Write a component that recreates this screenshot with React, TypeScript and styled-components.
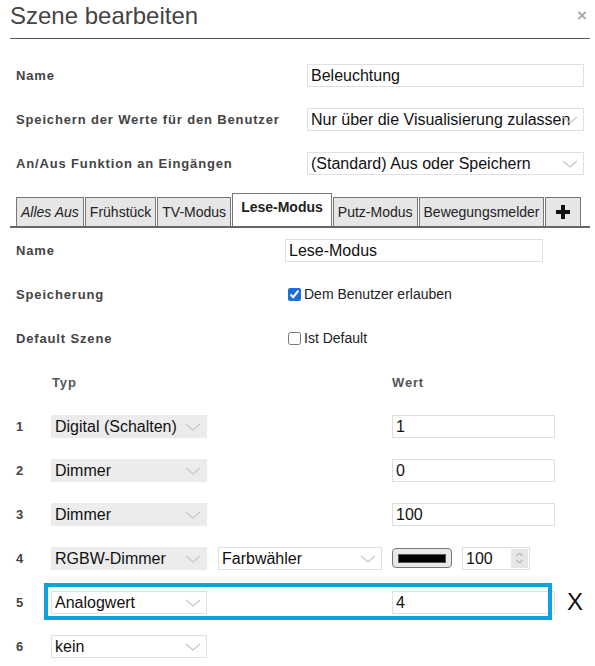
import React from 'react'
import styled, { createGlobalStyle } from 'styled-components'

const GlobalStyle = createGlobalStyle`
  body {
    margin: 0;
    background: #ffffff;
    font-family: 'Liberation Sans', Arial, sans-serif;
    color: #222;
  }
`

const Dialog = styled.div`
  width: 595px;
  box-sizing: border-box;
  padding: 0 5px 0 10px;
`

const Header = styled.div`
  display: flex;
  justify-content: space-between;
  align-items: flex-start;
  height: 38px;
  border-bottom: 1px solid #555;
`

const Title = styled.h1`
  margin: 0;
  font-size: 24px;
  line-height: 31px;
  font-weight: normal;
  color: #444;
`

const Close = styled.span`
  font-size: 17px;
  line-height: 32px;
  font-weight: bold;
  color: #aaa;
  margin-right: 3px;
`

const Section = styled.div<{ top?: number }>`
  padding-left: 6px;
  padding-top: ${(p) => p.top || 0}px;
`

const Row = styled.div`
  display: flex;
  align-items: center;
  height: 44px;
  position: relative;
`

const Label = styled.div<{ w: number }>`
  width: ${(p) => p.w}px;
  flex-shrink: 0;
  font-size: 13px;
  font-weight: bold;
  letter-spacing: 0.85px;
  color: #444;
`

const TextInput = styled.div<{ w: number }>`
  position: relative;
  width: ${(p) => p.w}px;
  height: 23px;
  box-sizing: border-box;
  border: 1px solid #e0e0e0;
  padding: 0 3px;
  font-size: 16px;
  line-height: 21px;
  color: #111;
  white-space: nowrap;
  overflow: hidden;
  flex-shrink: 0;
`

const Select = styled.div<{ w: number; filled?: boolean }>`
  position: relative;
  width: ${(p) => p.w}px;
  height: 23px;
  box-sizing: border-box;
  border: 1px solid ${(p) => (p.filled ? '#ececec' : '#e0e0e0')};
  background: ${(p) => (p.filled ? '#ececec' : '#ffffff')};
  padding: 0 3px;
  font-size: 16px;
  line-height: 21px;
  color: #111;
  white-space: nowrap;
  overflow: hidden;
  flex-shrink: 0;
`

const ChevronBox = styled.span`
  position: absolute;
  right: 5px;
  top: 7px;
  display: flex;
`

const Chevron = () => (
  <ChevronBox>
    <svg width="16" height="8" viewBox="0 0 16 8">
      <path d="M1 1 L8 7 L15 1" fill="none" stroke="#c6c6c6" strokeWidth="1.2" />
    </svg>
  </ChevronBox>
)

const TabBar = styled.div`
  display: flex;
  align-items: flex-end;
  gap: 1px;
  height: 41px;
  padding-left: 6px;
  border-bottom: 2px solid #666;
`

const Tab = styled.div<{ active?: boolean; italic?: boolean; wide?: boolean }>`
  height: ${(p) => (p.active ? 33 : 29)}px;
  box-sizing: border-box;
  flex-shrink: 0;
  white-space: nowrap;
  padding: ${(p) => (p.active ? '5px 8px 0' : p.wide ? '0 10px' : '0 4px')};
  display: flex;
  align-items: ${(p) => (p.active ? 'flex-start' : 'center')};
  border: 1px solid #777;
  border-bottom: none;
  background: ${(p) => (p.active ? '#ffffff' : '#e6e6e6')};
  font-size: 14px;
  font-weight: ${(p) => (p.active ? 'bold' : 'normal')};
  font-style: ${(p) => (p.italic ? 'italic' : 'normal')};
  color: #222;
`

const CheckLabel = styled.label`
  display: flex;
  align-items: center;
  gap: 3px;
  font-size: 14px;
  color: #222;
  margin-left: 3px;
`

const Check = styled.input`
  margin: 0;
  width: 13px;
  height: 13px;
  accent-color: #1b6fd6;
`

const HeadCell = styled.div<{ w: number }>`
  width: ${(p) => p.w}px;
  font-size: 13px;
  font-weight: bold;
  letter-spacing: 0.85px;
  color: #555;
`

const Num = styled.div`
  width: 35px;
  flex-shrink: 0;
  font-size: 13px;
  font-weight: bold;
  color: #444;
`

const Middle = styled.div`
  width: 185px;
  flex-shrink: 0;
  display: flex;
  padding-left: 11px;
  box-sizing: border-box;
`

const ColorButton = styled.div`
  width: 60px;
  height: 20px;
  box-sizing: border-box;
  border: 1px solid #777;
  border-radius: 4px;
  background: #e9e9e9;
  display: flex;
  align-items: center;
  justify-content: center;
  margin-right: 10px;
  flex-shrink: 0;
`

const Swatch = styled.div`
  width: 48px;
  height: 9px;
  background: #000;
  border: 1px solid #555;
  box-sizing: border-box;
`

const Spinner = styled.span`
  position: absolute;
  right: 1px;
  top: 1px;
  bottom: 1px;
  width: 17px;
  background: #e6e6e6;
  display: flex;
  align-items: center;
  justify-content: center;
`

const Highlight = styled.div`
  position: absolute;
  left: 28px;
  top: 3px;
  width: 508px;
  height: 37px;
  box-sizing: border-box;
  border: 4px solid #0ba2df;
  pointer-events: none;
`

const Remove = styled.span`
  margin-left: 12px;
  font-size: 24px;
  color: #111;
`

type TypeRow = { n: number; type: string; filled: boolean; value?: string }

const rows: TypeRow[] = [
  { n: 1, type: 'Digital (Schalten)', filled: true, value: '1' },
  { n: 2, type: 'Dimmer', filled: true, value: '0' },
  { n: 3, type: 'Dimmer', filled: true, value: '100' },
]

const tabs = ['Alles Aus', 'Frühstück', 'TV-Modus', 'Lese-Modus', 'Putz-Modus', 'Bewegungsmelder']

const App = () => {
  return (
    <Dialog>
      <GlobalStyle />
      <Header>
        <Title>Szene bearbeiten</Title>
        <Close>×</Close>
      </Header>

      <Section top={14}>
        <Row>
          <Label w={291}>Name</Label>
          <TextInput w={277}>Beleuchtung</TextInput>
        </Row>
        <Row>
          <Label w={291}>Speichern der Werte für den Benutzer</Label>
          <Select w={277}>
            Nur über die Visualisierung zulassen
            <Chevron />
          </Select>
        </Row>
        <Row>
          <Label w={291}>An/Aus Funktion an Eingängen</Label>
          <Select w={277}>
            (Standard) Aus oder Speichern
            <Chevron />
          </Select>
        </Row>
      </Section>

      <TabBar>
        {tabs.map((t, i) => (
          <Tab key={t} italic={i === 0} active={t === 'Lese-Modus'}>
            {t}
          </Tab>
        ))}
        <Tab wide>
          <svg width="14" height="14" viewBox="0 0 14 14">
            <path d="M5 0h4v5h5v4H9v5H5V9H0V5h5z" fill="#111" />
          </svg>
        </Tab>
      </TabBar>

      <Section>
        <Row>
          <Label w={269}>Name</Label>
          <TextInput w={258}>Lese-Modus</TextInput>
        </Row>
        <Row>
          <Label w={269}>Speicherung</Label>
          <CheckLabel>
            <Check type="checkbox" defaultChecked />
            Dem Benutzer erlauben
          </CheckLabel>
        </Row>
        <Row>
          <Label w={269}>Default Szene</Label>
          <CheckLabel>
            <Check type="checkbox" />
            Ist Default
          </CheckLabel>
        </Row>
        <Row>
          <HeadCell w={36} />
          <HeadCell w={340}>Typ</HeadCell>
          <HeadCell w={100}>Wert</HeadCell>
        </Row>

        {rows.map((r) => (
          <Row key={r.n}>
            <Num>{r.n}</Num>
            <Select w={156} filled={r.filled}>
              {r.type}
              <Chevron />
            </Select>
            <Middle />
            <TextInput w={163}>{r.value}</TextInput>
          </Row>
        ))}

        <Row>
          <Num>4</Num>
          <Select w={156} filled>
            RGBW-Dimmer
            <Chevron />
          </Select>
          <Middle>
            <Select w={164}>
              Farbwähler
              <Chevron />
            </Select>
          </Middle>
          <ColorButton>
            <Swatch />
          </ColorButton>
          <TextInput w={68}>
            100
            <Spinner>
              <svg width="9" height="14" viewBox="0 0 9 14">
                <path d="M1.5 5 L4.5 2 L7.5 5 M1.5 9 L4.5 12 L7.5 9" fill="none" stroke="#999" strokeWidth="1" />
              </svg>
            </Spinner>
          </TextInput>
        </Row>

        <Row>
          <Num>5</Num>
          <Select w={156}>
            Analogwert
            <Chevron />
          </Select>
          <Middle />
          <TextInput w={163}>4</TextInput>
          <Remove>X</Remove>
          <Highlight />
        </Row>

        <Row>
          <Num>6</Num>
          <Select w={156}>
            kein
            <Chevron />
          </Select>
        </Row>
      </Section>
    </Dialog>
  )
}

export default App
